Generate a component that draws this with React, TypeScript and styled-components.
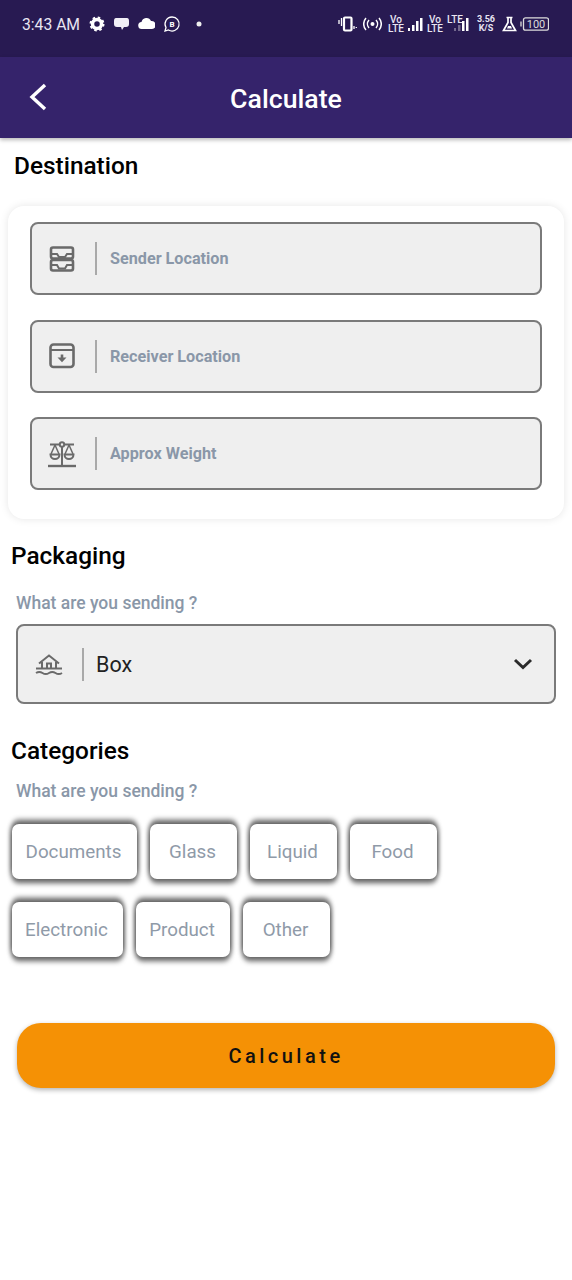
import React from 'react';
import styled, { createGlobalStyle } from 'styled-components';

const GlobalStyle = createGlobalStyle`
  html, body {
    margin: 0;
    padding: 0;
    background: #fff;
    font-family: Roboto, "Liberation Sans", sans-serif;
  }
  * { box-sizing: border-box; }
`;

const Page = styled.div`
  width: 572px;
  height: 1280px;
  overflow: hidden;
  background: #fff;
`;

const StatusBar = styled.div`
  height: 57px;
  background: #281a52;
  color: #e9e6f2;
  display: flex;
  align-items: center;
  justify-content: space-between;
  padding: 0 23px 9px 22px;
`;

const StatusGroup = styled.div`
  display: flex;
  align-items: center;
`;

const Clock = styled.span`
  font-size: 15.7px;
  margin-right: 9px;
`;

const NetLabel = styled.span<{ $gap: number }>`
  font-size: 10px;
  font-weight: 500;
  line-height: 9px;
  text-align: center;
  display: inline-block;
  margin-right: ${p => p.$gap}px;
`;

const Speed = styled(NetLabel)`
  font-size: 9px;
  font-weight: 700;
`;

const Header = styled.header`
  height: 81px;
  padding-top: 2px;
  background: #35236b;
  display: flex;
  align-items: center;
  justify-content: center;
  position: relative;
  box-shadow: 0 2px 4px rgba(0, 0, 0, 0.28);
`;

const Back = styled.svg`
  position: absolute;
  left: 27px;
  top: 25px;
`;

const Title = styled.h1`
  margin: 0;
  font-size: 26.700px;
  font-weight: 500;
  color: #fff;
`;

const SectionTitle = styled.h2<{ $left: number; $top: number }>`
  margin: ${p => p.$top}px 0 0 ${p => p.$left}px;
  font-size: 24.400px;
  line-height: 28px;
  font-weight: 500;
  color: #000;
`;

const Card = styled.div`
  margin: 26px 8px 0;
  height: 313px;
  padding: 16px 22px;
  border-radius: 16px;
  background: #fff;
  box-shadow: 0 0 8px rgba(0, 0, 0, 0.1);
  display: flex;
  flex-direction: column;
  gap: 24.5px;
`;

const Field = styled.div`
  height: 73px;
  background: #efefef;
  border: 2px solid #7a7a7a;
  border-radius: 8px;
  display: flex;
  align-items: center;
  padding-left: 16px;
`;

const FieldIcon = styled.svg`
  flex: none;
  width: 28px;
  height: 28px;
  color: #6a6a6a;
`;

const Divider = styled.span`
  flex: none;
  width: 2px;
  height: 33px;
  background: #a9a9a9;
  margin: 0 13px 0 19px;
`;

const Placeholder = styled.span`
  font-size: 16.200px;
  font-weight: 700;
  color: #8a97a8;
`;

const Hint = styled.div<{ $top: number }>`
  margin: ${p => p.$top}px 0 0 16px;
  font-size: 17.500px;
  line-height: 21px;
  font-weight: 500;
  color: #8a97a8;
`;

const Select = styled.div`
  margin: 10px 16px 0;
  height: 80px;
  background: #efefef;
  border: 2px solid #7a7a7a;
  border-radius: 8px;
  display: flex;
  align-items: center;
  padding: 0 21px 0 17px;
`;

const SelectValue = styled.span`
  flex: 1;
  margin-left: -1px;
  font-size: 21.500px;
  color: #222;
`;

const Chips = styled.div`
  margin: 22px 0 0 12px;
  display: flex;
  flex-wrap: wrap;
  gap: 23px 13px;
  width: 440px;
`;

const Chip = styled.div<{ $width: number }>`
  width: ${p => p.$width}px;
  height: 55px;
  padding-right: 2px;
  border-radius: 7px;
  background: #fff;
  display: flex;
  align-items: center;
  justify-content: center;
  font-size: 18.800px;
  color: #8f9aa8;
  box-shadow: 0 5px 5px 0 rgba(0, 0, 0, 0.42), 0 -5px 5px 0 rgba(0, 0, 0, 0.42),
    0 0 4px 2px rgba(0, 0, 0, 0.35);
`;

const CalcButton = styled.button`
  display: block;
  margin: 66px 0 0 17px;
  width: 538px;
  height: 65px;
  border: 0;
  border-radius: 24px;
  background: #f59105;
  color: #111;
  font-family: inherit;
  font-size: 20px;
  font-weight: 500;
  letter-spacing: 3.5px;
  box-shadow: 0 2px 5px rgba(0, 0, 0, 0.3);
`;

const chipsData: [string, number][] = [
  ['Documents', 125],
  ['Glass', 87],
  ['Liquid', 87],
  ['Food', 87],
  ['Electronic', 111],
  ['Product', 94],
  ['Other', 87],
];

const iconBase = { fill: 'none', stroke: 'currentColor', strokeWidth: 2.6 };

const TrayIcon = () => (
  <FieldIcon viewBox="0 0 28 28" {...iconBase}>
    <rect x="3" y="2.500" width="22" height="11" rx="2" />
    <rect x="3" y="15" width="22" height="10.500" rx="2" />
    <path d="M3 9h6l2 3h6l2-3h6M3 20h6l2 3.500h6l2-3.500h6" strokeWidth="2" />
  </FieldIcon>
);

const ArchiveIcon = () => (
  <FieldIcon viewBox="0 0 28 28" {...iconBase}>
    <rect x="2.500" y="2.500" width="23" height="22.500" rx="3" />
    <path d="M2.500 8h23" strokeWidth="2" />
    <path d="M14 12.500v4" />
    <path d="M9.500 15.500h9l-4.500 4.800z" fill="currentColor" stroke="none" />
  </FieldIcon>
);

const ScaleIcon = () => (
  <FieldIcon viewBox="0 0 28 28" {...iconBase} strokeWidth={2}>
    <path d="M0 26h28" strokeWidth="2.400" />
    <path d="M14 7v19M2 4.500h9M17 4.500h9" />
    <circle cx="14" cy="4.500" r="2.200" />
    <path d="M7 5l-4 9M7 5l4 9M21 5l-4 9M21 5l4 9" strokeWidth="1.500" />
    <path d="M2.500 14.500a4.500 4.500 0 0 0 9 0zM16.500 14.500a4.500 4.500 0 0 0 9 0z" />
  </FieldIcon>
);

const HouseWaterIcon = () => (
  <FieldIcon viewBox="0 0 28 28" {...iconBase} strokeWidth={2}>
    <path d="M4 13.500L14 5.500l10 8M7 12v6M21 12v6M12 18v-4.500h4V18" />
    <path d="M1 18.500h26" />
    <path d="M1 23c2.300-1.400 4.300-1.400 6.500 0s4.300 1.400 6.500 0 4.300-1.400 6.500 0 4.300 1.400 6.500 0" />
  </FieldIcon>
);

const Glyph = ({ w, gap = 8, children }: { w: number; gap?: number; children: React.ReactNode }) => (
  <svg width={w} height="18" viewBox={`0 0 ${w} 18`} style={{ marginRight: gap }}>
    {children}
  </svg>
);

const Bars = ({ gap, dim }: { gap: number; dim?: boolean }) => (
  <Glyph w={15} gap={gap}>
    <rect x="0" y="13" width="2" height="3" fill="#fff" opacity={dim ? 0.35 : 1} />
    <rect x="4" y="10" width="2.500" height="6" fill="#fff" opacity={dim ? 0.35 : 1} />
    <rect x="8" y="6" width="2.500" height="10" fill="#fff" />
    <rect x="12" y="3" width="2.500" height="13" fill="#fff" />
  </Glyph>
);

const App = () => {
  return (
    <Page>
      <GlobalStyle />
      <StatusBar>
        <StatusGroup>
          <Clock>3:43 AM</Clock>
          <Glyph w={16}>
            <circle cx="8" cy="9" r="4.500" fill="none" stroke="#fff" strokeWidth="3.500" />
            <circle cx="8" cy="9" r="6.500" fill="none" stroke="#fff" strokeWidth="2" strokeDasharray="2.500 2.600" />
          </Glyph>
          <Glyph w={17}>
            <path d="M3 3h11q2 0 2 3v3q0 3-3 3h-2l-2 3-1-3H4q-3 0-3-3V6q0-3 2-3z" fill="#f1eff6" />
          </Glyph>
          <Glyph w={17}>
            <path d="M4 14a3.500 3.500 0 0 1-.5-7 5 5 0 0 1 9.500-1 4 4 0 0 1 1 8z" fill="#fff" />
          </Glyph>
          <Glyph w={18}>
            <path d="M9 2a7 7 0 1 1-3.500 13L2 16l1-3.500A7 7 0 0 1 9 2z" fill="none" stroke="#fff" strokeWidth="1.300" />
            <text x="9" y="12" fontSize="8" fontWeight="700" textAnchor="middle" fill="#fff">B</text>
          </Glyph>
          <Glyph w={14}>
            <circle cx="10" cy="9" r="2.500" fill="#eee" />
          </Glyph>
        </StatusGroup>
        <StatusGroup>
          <Glyph w={19} gap={6}>
            <rect x="6" y="2.500" width="7.500" height="13" rx="1" fill="none" stroke="#fff" strokeWidth="2.200" />
            <path d="M1 5v4M3.500 3v8M16 11v3M18.300 12v1" stroke="#fff" strokeWidth="1.300" />
          </Glyph>
          <Glyph w={19} gap={6}>
            <circle cx="9.500" cy="9" r="2" fill="#fff" />
            <path d="M6 5a6 6 0 0 0 0 8M13 5a6 6 0 0 1 0 8M3 3a9 9 0 0 0 0 12M16 3a9 9 0 0 1 0 12" fill="none" stroke="#fff" strokeWidth="1.500" />
          </Glyph>
          <NetLabel $gap={4}>Vo<br />LTE</NetLabel>
          <Bars gap={4} />
          <NetLabel $gap={4}>Vo<br />LTE</NetLabel>
          <NetLabel $gap={-9}>LTE<br />&nbsp;</NetLabel>
          <Bars gap={8} dim />
          <Speed $gap={7}>3.56<br />K/S</Speed>
          <Glyph w={15} gap={3}>
            <path d="M4.500 2.500h6M6 2.500v5L1.500 15.500h12L9 7.500v-5" fill="none" stroke="#fff" strokeWidth="1.700" />
            <path d="M6 11h3l1 2.500H5z" fill="#fff" />
          </Glyph>
          <svg width="29" height="14" viewBox="0 0 29 14">
            <path d="M1 4.500v5" stroke="#ddd" strokeWidth="1.300" />
            <rect x="3.500" y=".8" width="25" height="12.400" rx="2" fill="none" stroke="#ddd" strokeWidth="1.300" />
            <text x="16" y="11" fontSize="11" textAnchor="middle" fill="#ddd">100</text>
          </svg>
        </StatusGroup>
      </StatusBar>

      <Header>
        <Back width="22" height="30" viewBox="0 0 22 30" fill="none" stroke="#fff" strokeWidth="3.400">
          <path d="M18 3L5 15l13 12" />
        </Back>
        <Title>Calculate</Title>
      </Header>

      <SectionTitle $left={14} $top={14}>Destination</SectionTitle>
      <Card>
        <Field>
          <TrayIcon />
          <Divider />
          <Placeholder>Sender Location</Placeholder>
        </Field>
        <Field>
          <ArchiveIcon />
          <Divider />
          <Placeholder>Receiver Location</Placeholder>
        </Field>
        <Field>
          <ScaleIcon />
          <Divider />
          <Placeholder>Approx Weight</Placeholder>
        </Field>
      </Card>

      <SectionTitle $left={11} $top={23}>Packaging</SectionTitle>
      <Hint $top={23}>What are you sending ?</Hint>
      <Select>
        <HouseWaterIcon />
        <Divider />
        <SelectValue>Box</SelectValue>
        <svg width="20" height="12" viewBox="0 0 20 12" fill="none" stroke="#2b2b2b" strokeWidth="3">
          <path d="M2 2l8 7.500L18 2" />
        </svg>
      </Select>

      <SectionTitle $left={11} $top={33}>Categories</SectionTitle>
      <Hint $top={16}>What are you sending ?</Hint>
      <Chips>
        {chipsData.map(([label, width]) => (
          <Chip key={label} $width={width}>{label}</Chip>
        ))}
      </Chips>

      <CalcButton>Calculate</CalcButton>
    </Page>
  );
};

export default App;
